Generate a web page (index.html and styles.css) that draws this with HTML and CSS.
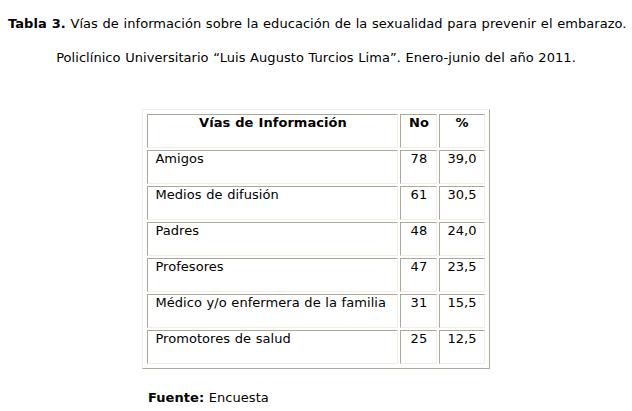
FILE: index.html
```html
<!DOCTYPE html>
<html lang="es">
<head>
<meta charset="utf-8">
<title>Tabla 3</title>
<link rel="stylesheet" href="styles.css">
</head>
<body>
<div class="page">
  <p class="title"><b>Tabla 3.</b> Vías de información sobre la educación de la sexualidad para prevenir el embarazo.</p>
  <p class="sub">Policlínico Universitario “Luis Augusto Turcios Lima”. Enero-junio del año 2011.</p>
  <table class="data">
    <thead>
      <tr><th class="c1">Vías de Información</th><th class="c2">No</th><th class="c3">%</th></tr>
    </thead>
    <tbody>
      <tr><td class="c1">Amigos</td><td class="c2">78</td><td class="c3">39,0</td></tr>
      <tr><td class="c1">Medios de difusión</td><td class="c2">61</td><td class="c3">30,5</td></tr>
      <tr><td class="c1">Padres</td><td class="c2">48</td><td class="c3">24,0</td></tr>
      <tr><td class="c1">Profesores</td><td class="c2">47</td><td class="c3">23,5</td></tr>
      <tr><td class="c1">Médico y/o enfermera de la familia</td><td class="c2">31</td><td class="c3">15,5</td></tr>
      <tr><td class="c1">Promotores de salud</td><td class="c2">25</td><td class="c3">12,5</td></tr>
    </tbody>
  </table>
  <p class="source"><b>Fuente:</b> Encuesta</p>
</div>
</body>
</html>
```
FILE: styles.css
```css
html, body {
  margin: 0;
  padding: 0;
  background: #ffffff;
}
body {
  font-family: "DejaVu Sans", Verdana, sans-serif;
  font-size: 13px;
  line-height: 16px;
  color: #000000;
  word-spacing: 0.45px;
  letter-spacing: 0.05px;
}
.page {
  padding: 0 8px;
  display: flow-root;
}
.title {
  margin: 16px 0 0 0;
  white-space: nowrap;
}
.sub {
  margin: 18px 0 0 0;
  text-align: center;
}
.data {
  margin: 43px auto 0 auto;
  border-collapse: separate;
  border-spacing: 2px;
  padding: 2px;
  border: 1px solid;
  border-color: #f1efe2 #aca899 #aca899 #f1efe2;
}
.data th,
.data td {
  border: 1px solid;
  border-color: #aca899 #f1efe2 #f1efe2 #aca899;
  padding: 0 7px;
  height: 32px;
  vertical-align: top;
  box-sizing: content-box;
}
.data th {
  font-weight: bold;
  text-align: center;
}
.data td.c1 { text-align: left; }
.data .c2, .data .c3 { text-align: center; }
.data .c1 { width: 235px; }
.data .c2 { width: 21px; }
.data .c3 { width: 29px; }
.source {
  margin: 21px 0 0 140px;
}
```
